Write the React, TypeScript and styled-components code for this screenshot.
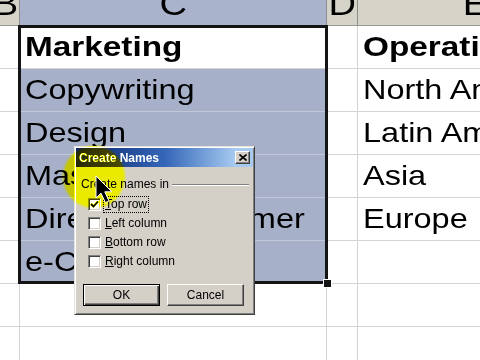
import React from 'react'
import styled, { createGlobalStyle } from 'styled-components'

const GlobalStyle = createGlobalStyle`
  html, body {
    margin: 0;
    padding: 0;
    background: #fff;
  }
`

const Sheet = styled.div`
  position: relative;
  width: 480px;
  height: 360px;
  overflow: hidden;
  background: #fff;
  font-family: "Liberation Sans", Arial, sans-serif;
`

const Grid = styled.div`
  display: grid;
  grid-template-columns: 29px 307px 31px 236px;
  grid-template-rows: 26px;
  grid-auto-rows: 43px;
  width: 603px;
  margin-left: -9px;
`

const HeadCell = styled.div<{ $selected?: boolean }>`
  box-sizing: border-box;
  display: flex;
  align-items: flex-end;
  justify-content: center;
  overflow: hidden;
  padding-bottom: 5px;
  background: ${p => (p.$selected ? '#a9b4cc' : '#d6d3c9')};
  border-right: 1px solid #8c8c8c;
  border-bottom: 1px solid #9a9a9a;
  font-size: 34px;
  line-height: 1;
  color: #000;
`

const HeadLetter = styled.span`
  display: inline-block;
  transform: scaleX(1.12);
`

const Cell = styled.div<{ $selected?: boolean; $bold?: boolean }>`
  box-sizing: border-box;
  display: flex;
  align-items: flex-end;
  padding: 0 0 7px 5px;
  background: ${p => (p.$selected ? '#a7b0c9' : '#fff')};
  border-right: 1px solid #d4d4d4;
  border-bottom: 1px solid ${p => (p.$selected ? '#c3c8d8' : '#d4d4d4')};
  font-size: 28px;
  line-height: 1;
  font-weight: ${p => (p.$bold ? 700 : 400)};
  color: #000;
  white-space: nowrap;
`

const CellText = styled.span<{ $bold?: boolean }>`
  display: inline-block;
  transform: scaleX(${p => (p.$bold ? 1.19 : 1.16)});
  transform-origin: left bottom;
`

const Selection = styled.div`
  position: absolute;
  left: 18px;
  top: 25px;
  width: 310px;
  height: 259px;
  box-sizing: border-box;
  border: 3px solid #141414;
  pointer-events: none;
`

const FillHandle = styled.div`
  position: absolute;
  right: -6px;
  bottom: -6px;
  width: 7px;
  height: 7px;
  box-sizing: border-box;
  background: #141414;
  outline: 1px solid #fff;
`

const Dialog = styled.div`
  position: absolute;
  left: 74px;
  top: 146px;
  width: 181px;
  height: 169px;
  box-sizing: border-box;
  display: flex;
  flex-direction: column;
  padding: 1px;
  background: #d4d0c8;
  border: 1px solid;
  border-color: #e6e3dc #404040 #404040 #e6e3dc;
  box-shadow: inset 1px 1px 0 #fff, inset -1px -1px 0 #808080;
  font-family: "Liberation Sans", Tahoma, sans-serif;
  font-size: 12px;
  color: #000;
`

const TitleBar = styled.div`
  display: flex;
  align-items: center;
  justify-content: space-between;
  height: 19px;
  padding: 0 3px;
  background: linear-gradient(to right, #0a246a, #3466b8 50%, #a6caf0 90%);
`

const TitleText = styled.span`
  color: #fff;
  font-weight: 700;
  font-size: 12px;
`

const CloseButton = styled.div`
  width: 15px;
  height: 13px;
  box-sizing: border-box;
  display: flex;
  align-items: center;
  justify-content: center;
  background: #d4d0c8;
  border: 1px solid;
  border-color: #fff #404040 #404040 #fff;
  box-shadow: inset -1px -1px 0 #808080;
`

const Body = styled.div`
  display: flex;
  flex-direction: column;
  padding: 10px 4px 0 5px;
`

const GroupLabel = styled.div`
  display: flex;
  align-items: center;
  gap: 3px;
  height: 14px;
  margin-bottom: 4px;
`

const EtchedLine = styled.div`
  flex: 1;
  border-top: 1px solid #808080;
  border-bottom: 1px solid #fff;
  margin-top: 1px;
`

const CheckRow = styled.div`
  display: flex;
  align-items: center;
  height: 19px;
  margin-left: 7px;
`

const CheckBox = styled.div`
  width: 13px;
  height: 13px;
  box-sizing: border-box;
  display: flex;
  align-items: center;
  justify-content: center;
  background: #fff;
  border: 1px solid;
  border-color: #808080 #fff #fff #808080;
  box-shadow: inset 1px 1px 0 #404040, inset -1px -1px 0 #d4d0c8;
`

const CheckLabel = styled.span<{ $focused?: boolean }>`
  margin-left: 3px;
  padding: 1px;
  outline: ${p => (p.$focused ? '1px dotted #000' : 'none')};
  line-height: 13px;
`

const ButtonRow = styled.div`
  display: flex;
  gap: 7px;
  margin: 13px 0 0 2px;
`

const DialogButton = styled.div<{ $default?: boolean }>`
  width: 77px;
  height: 22px;
  box-sizing: border-box;
  display: flex;
  align-items: center;
  justify-content: center;
  background: #d4d0c8;
  border: 1px solid;
  border-color: ${p => (p.$default ? '#000' : '#fff #404040 #404040 #fff')};
  box-shadow: ${p =>
    p.$default
      ? 'inset 1px 1px 0 #fff, inset -1px -1px 0 #404040, inset -2px -2px 0 #808080'
      : 'inset -1px -1px 0 #808080'};
`

// yellow cursor spotlight from the screen recorder
const Highlight = styled.div`
  position: absolute;
  left: 63px;
  top: 146px;
  width: 62px;
  height: 62px;
  border-radius: 50%;
  background: #ffff00;
  mix-blend-mode: color;
  filter: blur(1px);
  pointer-events: none;
`

const Cursor = styled.svg`
  position: absolute;
  left: 95px;
  top: 175px;
  pointer-events: none;
`

const columnLetters = ['B', 'C', 'D', 'E']

const rows: { c: string; e: string; bold?: boolean }[] = [
  { c: 'Marketing', e: 'Operations', bold: true },
  { c: 'Copywriting', e: 'North America' },
  { c: 'Design', e: 'Latin America' },
  { c: 'Mass Media', e: 'Asia' },
  { c: 'Direct to Consumer', e: 'Europe' },
  { c: 'e-Commerce', e: '' },
  { c: '', e: '' },
  { c: '', e: '' },
]

const options = [
  { key: 'T', rest: 'op row', checked: true },
  { key: 'L', rest: 'eft column' },
  { key: 'B', rest: 'ottom row' },
  { key: 'R', rest: 'ight column' },
]

function CheckMark() {
  return (
    <svg width="9" height="9" viewBox="0 0 9 9">
      <path d="M1 4 L3.5 6.5 L8 1.5" stroke="#000" strokeWidth="1.8" fill="none" />
    </svg>
  )
}

function CloseIcon() {
  return (
    <svg width="8" height="7" viewBox="0 0 8 7">
      <path d="M0.5 0.5 L7.5 6.5 M7.5 0.5 L0.5 6.5" stroke="#000" strokeWidth="1.6" />
    </svg>
  )
}

function CreateNamesDialog() {
  return (
    <Dialog>
      <TitleBar>
        <TitleText>Create Names</TitleText>
        <CloseButton>
          <CloseIcon />
        </CloseButton>
      </TitleBar>
      <Body>
        <GroupLabel>
          <span>Create names in</span>
          <EtchedLine />
        </GroupLabel>
        {options.map(o => (
          <CheckRow key={o.key}>
            <CheckBox>{o.checked && <CheckMark />}</CheckBox>
            <CheckLabel $focused={o.checked}>
              <u>{o.key}</u>
              {o.rest}
            </CheckLabel>
          </CheckRow>
        ))}
        <ButtonRow>
          <DialogButton $default>OK</DialogButton>
          <DialogButton>Cancel</DialogButton>
        </ButtonRow>
      </Body>
    </Dialog>
  )
}

export default function App() {
  return (
    <Sheet>
      <GlobalStyle />
      <Grid>
        {columnLetters.map(l => (
          <HeadCell key={l} $selected={l === 'C'}>
            <HeadLetter>{l}</HeadLetter>
          </HeadCell>
        ))}
        {rows.map((r, i) => (
          <React.Fragment key={i}>
            <Cell />
            <Cell $selected={i > 0 && i < 6} $bold={r.bold}>
              <CellText $bold={r.bold}>{r.c}</CellText>
            </Cell>
            <Cell />
            <Cell $bold={r.bold}>
              <CellText $bold={r.bold}>{r.e}</CellText>
            </Cell>
          </React.Fragment>
        ))}
      </Grid>
      <Selection>
        <FillHandle />
      </Selection>
      <CreateNamesDialog />
      <Highlight />
      <Cursor width="20" height="30" viewBox="0 0 20 30">
        <path
          d="M1 1 L1 23 L6 18.2 L10.4 27.6 L14 26 L9.8 16.8 L16.8 16.8 Z"
          fill="#000"
          stroke="#fff"
          strokeWidth="1"
          strokeLinejoin="round"
        />
      </Cursor>
    </Sheet>
  )
}
